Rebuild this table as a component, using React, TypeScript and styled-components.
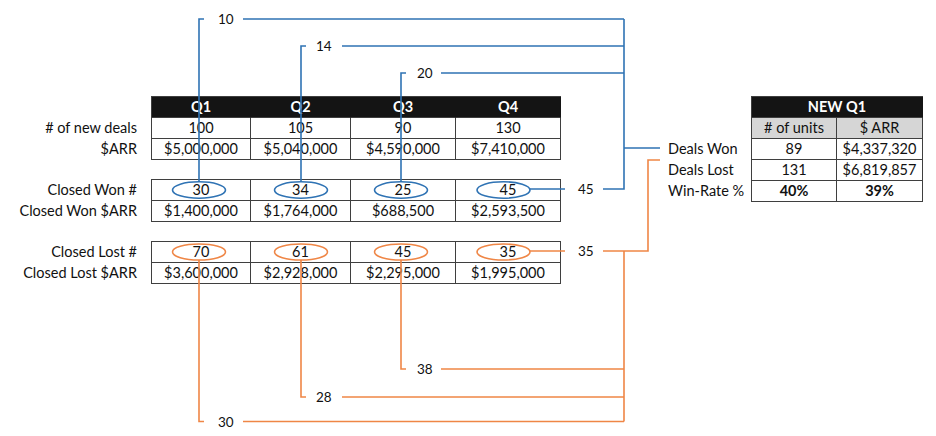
import React from "react";
import styled, { createGlobalStyle } from "styled-components";

const Global = createGlobalStyle`
  html, body { margin: 0; padding: 0; background: #ffffff; }
  body { font-family: Lato, "Liberation Sans", sans-serif; color: #111111; }
`;

const BLUE = "#2f73b4";
const ORANGE = "#ef8646";
const LINE = "#3f3f3f";

const Page = styled.div`
  position: relative;
  width: 936px;
  height: 436px;
  overflow: hidden;
  box-sizing: border-box;
  padding-top: 96px;
  display: flex;
  align-items: flex-start;
  gap: 107px;
  font-size: 14.5px;
`;

const Stack = styled.div`
  display: flex;
  flex-direction: column;
  gap: 19px;
`;

const Block = styled.div`
  display: flex;
`;

const Labels = styled.div<{ $width: number; $align: "left" | "right" }>`
  width: ${(p) => p.$width}px;
  box-sizing: border-box;
  padding-top: 1px;
  display: flex;
  flex-direction: column;
  text-align: ${(p) => p.$align};
  padding-right: ${(p) => (p.$align === "right" ? 14 : 0)}px;
`;

const Label = styled.div`
  height: 21px;
  line-height: 20px;
  white-space: nowrap;
`;

const Grid = styled.div<{ $cols: string }>`
  display: grid;
  grid-template-columns: ${(p) => p.$cols};
  grid-auto-rows: 21px;
  border-top: 1px solid ${LINE};
  border-left: 1px solid ${LINE};
`;

const Cell = styled.div<{ $variant?: "head" | "sub" | "body"; $bold?: boolean; $span?: number }>`
  box-sizing: border-box;
  border-right: 1px solid ${LINE};
  border-bottom: 1px solid ${LINE};
  display: flex;
  align-items: center;
  justify-content: center;
  line-height: 20px;
  white-space: nowrap;
  grid-column: span ${(p) => p.$span ?? 1};
  font-weight: ${(p) => (p.$bold || p.$variant === "head" ? 700 : 400)};
  background: ${(p) =>
    p.$variant === "head" ? "#141414" : p.$variant === "sub" ? "#d6d6d6" : "#ffffff"};
  color: ${(p) => (p.$variant === "head" ? "#ffffff" : "#111111")};
  ${(p) => (p.$variant === "head" ? "border-right-color: #141414;" : "")}
`;

const Overlay = styled.svg`
  position: absolute;
  left: 0;
  top: 0;
  width: 936px;
  height: 436px;
  pointer-events: none;
`;

const Tag = styled.text`
  font-family: Lato, "Liberation Sans", sans-serif;
  font-size: 13.5px;
  fill: #111111;
`;

const LEFT_COLS = "99px 100px 105px 105px";

type Group = { labels: string[]; header?: string[]; rows: string[][] };

const groups: Group[] = [
  {
    labels: ["", "# of new deals", "$ARR"],
    header: ["Q1", "Q2", "Q3", "Q4"],
    rows: [
      ["100", "105", "90", "130"],
      ["$5,000,000", "$5,040,000", "$4,590,000", "$7,410,000"],
    ],
  },
  {
    labels: ["Closed Won #", "Closed Won $ARR"],
    rows: [
      ["30", "34", "25", "45"],
      ["$1,400,000", "$1,764,000", "$688,500", "$2,593,500"],
    ],
  },
  {
    labels: ["Closed Lost #", "Closed Lost $ARR"],
    rows: [
      ["70", "61", "45", "35"],
      ["$3,600,000", "$2,928,000", "$2,295,000", "$1,995,000"],
    ],
  },
];

const summary = [
  { label: "Deals Won", units: "89", arr: "$4,337,320", bold: false },
  { label: "Deals Lost", units: "131", arr: "$6,819,857", bold: false },
  { label: "Win-Rate %", units: "40%", arr: "39%", bold: true },
];

const Connectors: React.FC = () => {
  const cx = [199, 301, 401, 503.5];
  const tags: { t: string; x: number; y: number }[] = [
    { t: "10", x: 218, y: 19 },
    { t: "14", x: 316, y: 46 },
    { t: "20", x: 417, y: 73 },
    { t: "45", x: 578, y: 189 },
    { t: "35", x: 578, y: 251 },
    { t: "38", x: 417, y: 369 },
    { t: "28", x: 316, y: 397 },
    { t: "30", x: 218, y: 421.5 },
  ];
  return (
    <Overlay viewBox="0 0 936 436">
      <g fill="none" stroke={BLUE} strokeWidth={1.6}>
        {cx.map((x) => (
          <ellipse key={x} cx={x} cy={190} rx={26.5} ry={8.2} />
        ))}
        <path d="M199 181.8 V19 H204 M243 19 H624" />
        <path d="M301 181.8 V46 H306 M342 46 H624" />
        <path d="M401 181.8 V73 H406 M441 73 H624" />
        <path d="M624 19 V189 H603 M530 189 H565 M624 148 H660" />
      </g>
      <g fill="none" stroke={ORANGE} strokeWidth={1.6}>
        {cx.map((x) => (
          <ellipse key={x} cx={x} cy={252} rx={26.5} ry={8} />
        ))}
        <path d="M199 260 V421.5 H204 M243 421.5 H624" />
        <path d="M301 260 V397 H306 M342 397 H624" />
        <path d="M401 260 V369 H406 M441 369 H624" />
        <path d="M530 251 H565 M603 251 H648 V160 H660 M624 251 V421.5" />
      </g>
      {tags.map((g) => (
        <Tag key={g.t + g.y} x={g.x} y={g.y} dominantBaseline="central">
          {g.t}
        </Tag>
      ))}
    </Overlay>
  );
};

export default function App() {
  return (
    <>
      <Global />
      <Page>
        <Stack>
          {groups.map((g, gi) => (
            <Block key={gi}>
              <Labels $width={151} $align="right">
                {g.labels.map((l, i) => (
                  <Label key={i}>{l}</Label>
                ))}
              </Labels>
              <Grid $cols={LEFT_COLS}>
                {g.header?.map((h) => (
                  <Cell key={h} $variant="head">
                    {h}
                  </Cell>
                ))}
                {g.rows.flat().map((v, i) => (
                  <Cell key={i}>{v}</Cell>
                ))}
              </Grid>
            </Block>
          ))}
        </Stack>
        <Block>
          <Labels $width={83} $align="left">
            <Label />
            <Label />
            {summary.map((s) => (
              <Label key={s.label}>{s.label}</Label>
            ))}
          </Labels>
          <Grid $cols="85px 86px">
            <Cell $variant="head" $span={2}>
              NEW Q1
            </Cell>
            <Cell $variant="sub">#&nbsp;of units</Cell>
            <Cell $variant="sub">$ ARR</Cell>
            {summary.map((s) => (
              <React.Fragment key={s.label}>
                <Cell $bold={s.bold}>{s.units}</Cell>
                <Cell $bold={s.bold}>{s.arr}</Cell>
              </React.Fragment>
            ))}
          </Grid>
        </Block>
        <Connectors />
      </Page>
    </>
  );
}
